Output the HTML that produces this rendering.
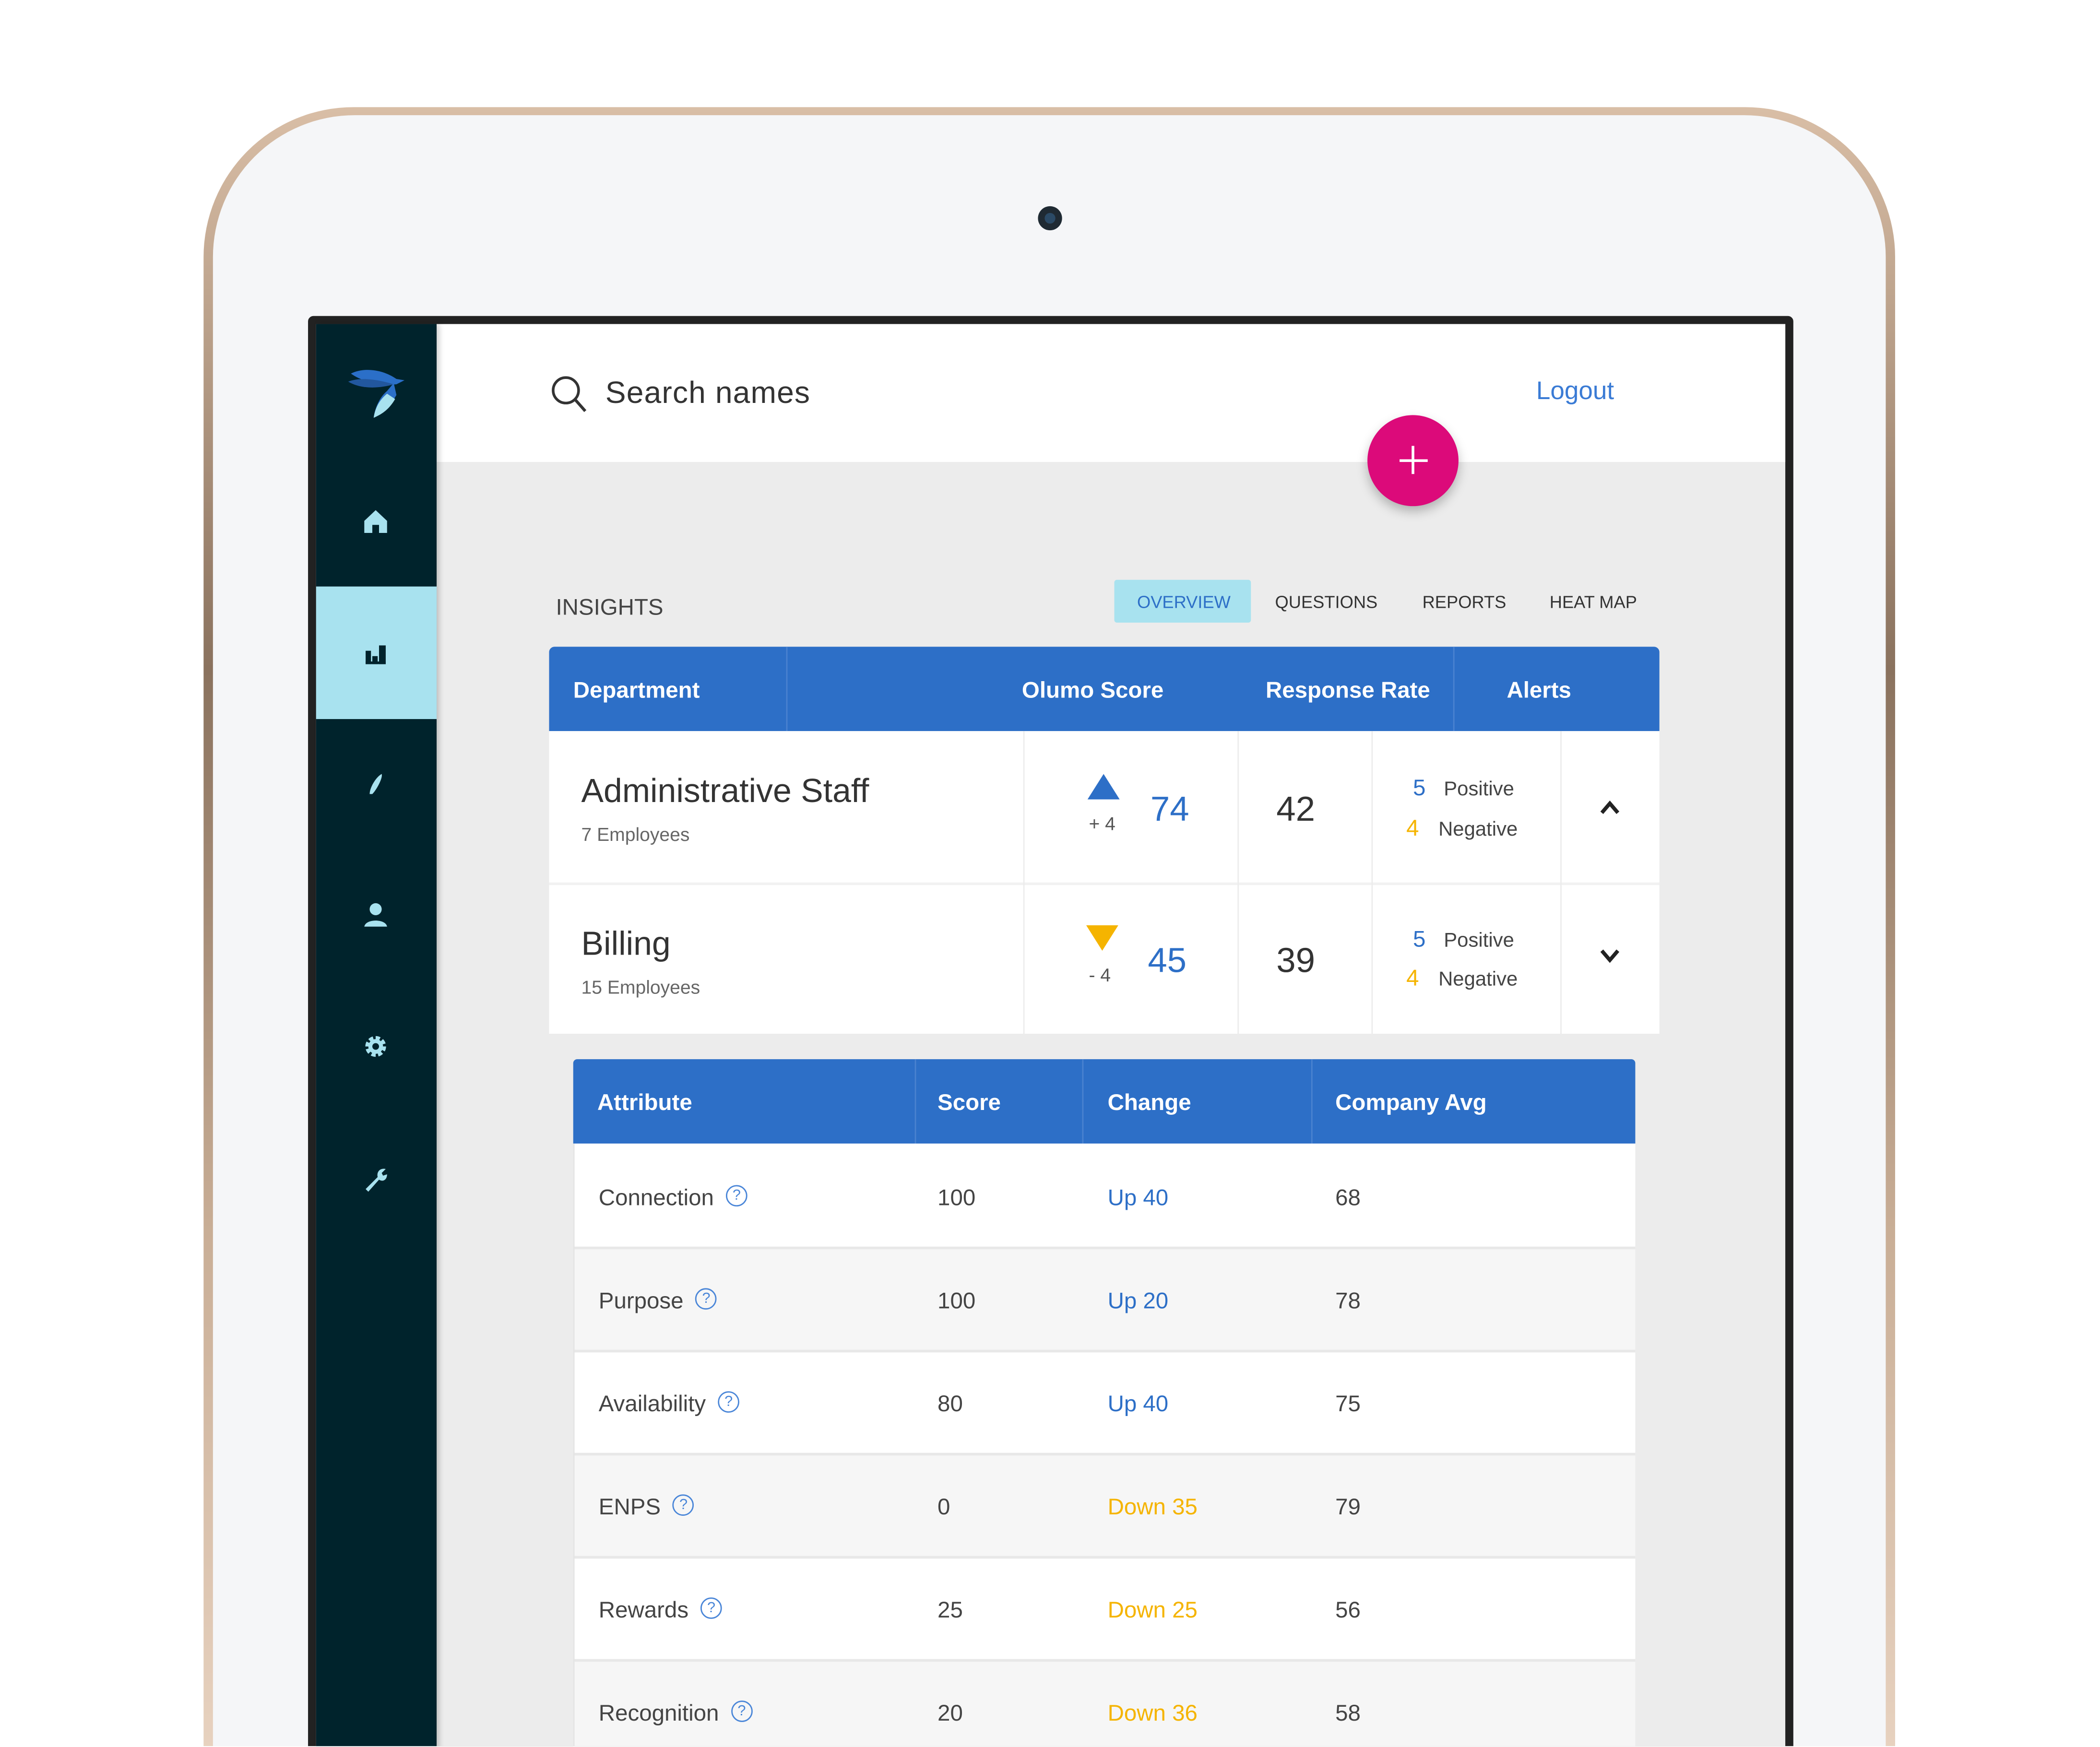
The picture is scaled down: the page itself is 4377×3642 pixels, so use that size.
<!DOCTYPE html>
<html><head><meta charset="utf-8">
<style>
html,body{margin:0;padding:0;background:#fff;overflow:hidden;}
body{width:4377px;height:3642px;position:relative;}
#s{position:absolute;left:0;top:0;width:1568px;height:1304px;transform-origin:0 0;transform:scale(2.7915,2.7915);font-family:"Liberation Sans",sans-serif;overflow:hidden;}
.a{position:absolute;}
.t{position:absolute;white-space:nowrap;line-height:1;}
.hd{color:#fff;font-weight:bold;font-size:17px;}
.vl{position:absolute;width:1px;background:#ececec;}
.q{display:inline-block;width:14px;height:14px;border:1px solid #4a86d8;border-radius:50%;color:#4a86d8;font-size:11px;text-align:center;line-height:14px;vertical-align:4px;margin-left:9px;}
</style></head><body>
<div id="s">
<div class="a" style="left:152px;top:80px;width:1263px;height:1400px;border-radius:112px;background:linear-gradient(180deg,#d9bea6,#8a725e 30%,#c9ae96 60%,#f5e2d2);"></div>
<div class="a" style="left:159px;top:86px;width:1249px;height:1400px;border-radius:106px;background:#f5f6f8;"></div>
<div class="a" style="left:775px;top:154px;width:18px;height:18px;border-radius:50%;background:#1f2a33;"></div>
<div class="a" style="left:780px;top:159px;width:8px;height:8px;border-radius:50%;background:#2b4a66;"></div>
<div class="a" style="left:230px;top:236px;width:1109px;height:1200px;background:#222;border-radius:4px;"></div>
<div class="a" style="left:236px;top:242px;width:1097px;height:1200px;background:#ececec;"></div>
<div class="a" style="left:326px;top:242px;width:1007px;height:103px;background:#fff;"></div>
<div class="a" style="left:236px;top:242px;width:90px;height:1100px;background:#00232c;box-shadow:2px 0 4px rgba(0,0,0,.2);"></div>
<div class="a" style="left:236px;top:438px;width:90px;height:99px;background:#a8e2ef;"></div>
<svg class="a" style="left:258px;top:268px" width="46" height="46" viewBox="0 0 46 46">
<path d="M4 11 C14 6 28 8 38 15 L44 16 L38 19 C28 20 14 18 4 11Z" fill="#2b6fc8"/>
<path d="M2 17 C12 13 26 16 36 19 C26 22 12 23 2 17Z" fill="#22579e"/>
<path d="M36 18 L38 27 C34 34 28 40 21 44 C22 36 26 28 31 24Z" fill="#2b6fc8"/>
<path d="M31 26 L37 30 C33 37 28 41 21 44 C22 37 25 31 31 26Z" fill="#a8e2ef"/>
</svg>
<svg class="a" style="left:270px;top:379px" width="21" height="21" viewBox="0 0 21 21"><path d="M10.5 2 L19 10 V19 H13 V13 H8 V19 H2 V10Z" fill="#a8e2ef"/></svg>
<svg class="a" style="left:271px;top:478px" width="20" height="20" viewBox="0 0 20 20"><rect x="2" y="8" width="4" height="10" fill="#00232c"/><rect x="7" y="12" width="4" height="6" fill="#00232c"/><rect x="12" y="4" width="5" height="14" fill="#00232c"/><rect x="2" y="16" width="15" height="2" fill="#00232c"/></svg>
<svg class="a" style="left:272px;top:576px" width="18" height="20" viewBox="0 0 18 20"><path d="M13 2 C14 5 9 14 6 17 L4 17 C4 12 9 4 13 2Z" fill="#a8e2ef"/></svg>
<svg class="a" style="left:270px;top:673px" width="21" height="21" viewBox="0 0 21 21"><circle cx="10.5" cy="6" r="4.5" fill="#a8e2ef"/><path d="M2 19 C3 13 18 13 19 19Z" fill="#a8e2ef"/></svg>
<svg class="a" style="left:270px;top:771px" width="21" height="21" viewBox="0 0 21 21"><circle cx="10.5" cy="10.5" r="6" fill="none" stroke="#a8e2ef" stroke-width="3.5" stroke-dasharray="3 1.7"/><circle cx="10.5" cy="10.5" r="5.5" fill="#a8e2ef"/><circle cx="10.5" cy="10.5" r="2.5" fill="#00232c"/></svg>
<svg class="a" style="left:270px;top:869px" width="22" height="22" viewBox="0 0 22 22"><path d="M3 19 L12 10 C11 6 14 3 18 4 L15 7 L16 9 L19 8 C19 12 16 14 13 12 L5 21Z" fill="#a8e2ef"/></svg>
<svg class="a" style="left:410px;top:279px" width="30" height="30" viewBox="0 0 30 30"><circle cx="12.5" cy="12.5" r="9.5" fill="none" stroke="#333" stroke-width="2"/><path d="M19.5 19.5 L27 28" stroke="#333" stroke-width="2.2"/></svg>
<div class="t" style="left:452px;top:282px;font-size:23px;color:#333;letter-spacing:.4px;">Search names</div>
<div class="t" style="left:1147px;top:283px;font-size:19px;color:#3a7bd5;">Logout</div>
<div class="a" style="left:1021px;top:310px;width:68px;height:68px;border-radius:50%;background:#dc0a7a;box-shadow:0 4px 8px rgba(0,0,0,.25);"></div>
<div class="a" style="left:1045px;top:343px;width:21px;height:2px;background:#fff;"></div>
<div class="a" style="left:1054px;top:333px;width:2px;height:21px;background:#fff;"></div>
<div class="t" style="left:415px;top:445px;font-size:17px;color:#444;">INSIGHTS</div>
<div class="a" style="left:832px;top:433px;width:102px;height:32px;background:#a8e2ef;border-radius:2px;"></div>
<div class="t" style="left:849px;top:443px;font-size:13px;color:#2d6fc7;">OVERVIEW</div>
<div class="t" style="left:952px;top:443px;font-size:13px;color:#333;">QUESTIONS</div>
<div class="t" style="left:1062px;top:443px;font-size:13px;color:#333;">REPORTS</div>
<div class="t" style="left:1157px;top:443px;font-size:13px;color:#333;">HEAT MAP</div>
<div class="a" style="left:410px;top:483px;width:829px;height:63px;background:#2d6fc7;border-radius:4px 4px 0 0;"></div>
<div class="a" style="left:587px;top:483px;width:1px;height:63px;background:#4a82d0;"></div>
<div class="a" style="left:1085px;top:483px;width:1px;height:63px;background:#4a82d0;"></div>
<div class="t hd" style="left:428px;top:507px;">Department</div>
<div class="t hd" style="left:763px;top:507px;">Olumo Score</div>
<div class="t hd" style="left:945px;top:507px;">Response Rate</div>
<div class="t hd" style="left:1125px;top:507px;">Alerts</div>
<div class="a" style="left:410px;top:546px;width:829px;height:226px;background:#fff;"></div>
<div class="a" style="left:410px;top:659px;width:829px;height:2px;background:#f2f2f2;"></div>
<div class="vl" style="left:764px;top:546px;height:226px;"></div>
<div class="vl" style="left:924px;top:546px;height:226px;"></div>
<div class="vl" style="left:1024px;top:546px;height:226px;"></div>
<div class="vl" style="left:1165px;top:546px;height:226px;"></div>
<div class="t" style="left:434px;top:579px;font-size:25px;color:#333;">Administrative Staff</div>
<div class="t" style="left:434px;top:616px;font-size:14px;color:#666;">7 Employees</div>
<svg class="a" style="left:812px;top:578px" width="24" height="19"><path d="M12 0 L24 19 H0Z" fill="#2d6fc7"/></svg>
<div class="t" style="left:813px;top:608px;font-size:14px;color:#555;">+ 4</div>
<div class="t" style="left:859px;top:591px;font-size:26px;color:#2d6fc7;">74</div>
<div class="t" style="left:953px;top:591px;font-size:26px;color:#333;">42</div>
<div class="t" style="left:1055px;top:580px;font-size:17px;color:#2d6fc7;">5</div>
<div class="t" style="left:1078px;top:582px;font-size:15px;color:#444;">Positive</div>
<div class="t" style="left:1050px;top:610px;font-size:17px;color:#f5b400;">4</div>
<div class="t" style="left:1074px;top:612px;font-size:15px;color:#444;">Negative</div>
<svg class="a" style="left:1194px;top:597px" width="16" height="12"><path d="M2 10 L8 3 L14 10" fill="none" stroke="#222" stroke-width="2.8"/></svg>
<div class="t" style="left:434px;top:693px;font-size:25px;color:#333;">Billing</div>
<div class="t" style="left:434px;top:730px;font-size:14px;color:#666;">15 Employees</div>
<svg class="a" style="left:811px;top:691px" width="24" height="19"><path d="M0 0 H24 L12 19Z" fill="#f5b400"/></svg>
<div class="t" style="left:813px;top:721px;font-size:14px;color:#555;">- 4</div>
<div class="t" style="left:857px;top:704px;font-size:26px;color:#2d6fc7;">45</div>
<div class="t" style="left:953px;top:704px;font-size:26px;color:#333;">39</div>
<div class="t" style="left:1055px;top:693px;font-size:17px;color:#2d6fc7;">5</div>
<div class="t" style="left:1078px;top:695px;font-size:15px;color:#444;">Positive</div>
<div class="t" style="left:1050px;top:722px;font-size:17px;color:#f5b400;">4</div>
<div class="t" style="left:1074px;top:724px;font-size:15px;color:#444;">Negative</div>
<svg class="a" style="left:1194px;top:708px" width="16" height="12"><path d="M2 2 L8 9 L14 2" fill="none" stroke="#222" stroke-width="2.8"/></svg>
<div class="a" style="left:428px;top:791px;width:793px;height:63px;background:#2d6fc7;border-radius:3px 3px 0 0;"></div>
<div class="a" style="left:683px;top:791px;width:1px;height:63px;background:#4a82d0;"></div>
<div class="a" style="left:808px;top:791px;width:1px;height:63px;background:#4a82d0;"></div>
<div class="a" style="left:979px;top:791px;width:1px;height:63px;background:#4a82d0;"></div>
<div class="t hd" style="left:446px;top:815px;">Attribute</div>
<div class="t hd" style="left:700px;top:815px;">Score</div>
<div class="t hd" style="left:827px;top:815px;">Change</div>
<div class="t hd" style="left:997px;top:815px;">Company Avg</div>
<div class="a" style="left:428px;top:854px;width:793px;height:77px;background:#fff;"></div>
<div class="a" style="left:428px;top:931px;width:793px;height:77px;background:#f6f6f6;border-top:2px solid #e8e8e8;box-sizing:border-box;"></div>
<div class="a" style="left:428px;top:1008px;width:793px;height:77px;background:#fff;border-top:2px solid #e8e8e8;box-sizing:border-box;"></div>
<div class="a" style="left:428px;top:1085px;width:793px;height:77px;background:#f6f6f6;border-top:2px solid #e8e8e8;box-sizing:border-box;"></div>
<div class="a" style="left:428px;top:1162px;width:793px;height:77px;background:#fff;border-top:2px solid #e8e8e8;box-sizing:border-box;"></div>
<div class="a" style="left:428px;top:1239px;width:793px;height:70px;background:#f6f6f6;border-top:2px solid #e8e8e8;box-sizing:border-box;"></div>
<div class="a" style="left:428px;top:854px;width:1px;height:455px;background:#e4e4e4;"></div>
<div class="t" style="left:447px;top:885px;font-size:17px;color:#444;">Connection<span class="q">?</span></div>
<div class="t" style="left:700px;top:886px;font-size:17px;color:#444;">100</div>
<div class="t" style="left:827px;top:886px;font-size:17px;color:#2d6fc7;">Up 40</div>
<div class="t" style="left:997px;top:886px;font-size:17px;color:#444;">68</div>
<div class="t" style="left:447px;top:962px;font-size:17px;color:#444;">Purpose<span class="q">?</span></div>
<div class="t" style="left:700px;top:963px;font-size:17px;color:#444;">100</div>
<div class="t" style="left:827px;top:963px;font-size:17px;color:#2d6fc7;">Up 20</div>
<div class="t" style="left:997px;top:963px;font-size:17px;color:#444;">78</div>
<div class="t" style="left:447px;top:1039px;font-size:17px;color:#444;">Availability<span class="q">?</span></div>
<div class="t" style="left:700px;top:1040px;font-size:17px;color:#444;">80</div>
<div class="t" style="left:827px;top:1040px;font-size:17px;color:#2d6fc7;">Up 40</div>
<div class="t" style="left:997px;top:1040px;font-size:17px;color:#444;">75</div>
<div class="t" style="left:447px;top:1116px;font-size:17px;color:#444;">ENPS<span class="q">?</span></div>
<div class="t" style="left:700px;top:1117px;font-size:17px;color:#444;">0</div>
<div class="t" style="left:827px;top:1117px;font-size:17px;color:#f5b400;">Down 35</div>
<div class="t" style="left:997px;top:1117px;font-size:17px;color:#444;">79</div>
<div class="t" style="left:447px;top:1193px;font-size:17px;color:#444;">Rewards<span class="q">?</span></div>
<div class="t" style="left:700px;top:1194px;font-size:17px;color:#444;">25</div>
<div class="t" style="left:827px;top:1194px;font-size:17px;color:#f5b400;">Down 25</div>
<div class="t" style="left:997px;top:1194px;font-size:17px;color:#444;">56</div>
<div class="t" style="left:447px;top:1270px;font-size:17px;color:#444;">Recognition<span class="q">?</span></div>
<div class="t" style="left:700px;top:1271px;font-size:17px;color:#444;">20</div>
<div class="t" style="left:827px;top:1271px;font-size:17px;color:#f5b400;">Down 36</div>
<div class="t" style="left:997px;top:1271px;font-size:17px;color:#444;">58</div>
</div>
</body></html>
